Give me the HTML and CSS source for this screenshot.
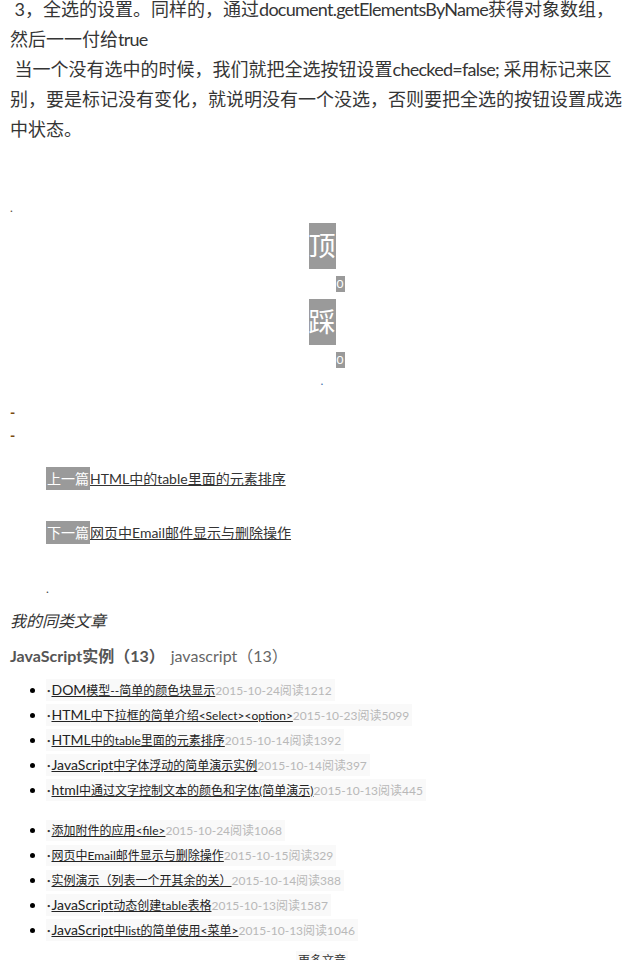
FILE: index.html
```html
<!DOCTYPE html>
<html lang="zh-CN">
<head>
<meta charset="utf-8">
<title>全选的设置</title>
<link rel="stylesheet" href="styles.css">
</head>
<body>
<div class="page">
  <div class="article">
    <p>&nbsp;3，全选的设置。同样的，通过<span class="en">document.getElementsByName</span>获得对象数组，然后一一付给<span class="en">true</span><br>&nbsp;当一个没有选中的时候，我们就把全选按钮设置<span class="en">checked=false;</span> 采用标记来区别，要是标记没有变化，就说明没有一个没选，否则要把全选的按钮设置成选中状态。</p>
  </div>

  <div class="tiny dot1">.</div>

  <div class="digg">
    <div class="digg-btn">顶</div>
    <div class="digg-count">0</div>
    <div class="digg-btn">踩</div>
    <div class="digg-count">0</div>
  </div>

  <div class="tiny dot2">.</div>

  <div class="tiny dash dash1">-</div>
  <div class="tiny dash dash2">-</div>

  <div class="nav">
    <div class="nav-row nav-prev"><span class="nav-tag">上一篇</span><a class="nav-link" href="#">HTML中的table里面的元素排序</a></div>
    <div class="nav-row nav-next"><span class="nav-tag">下一篇</span><a class="nav-link" href="#">网页中Email邮件显示与删除操作</a></div>
  </div>

  <div class="tiny dot3">.</div>

  <h3 class="related-title">我的同类文章</h3>

  <div class="cats"><b class="cat-main">JavaScript实例（13）</b><span class="cat-other">javascript（13）</span></div>

  <ul class="list list1">
    <li><span class="item"><span class="mk">•</span><a href="#"><span class="lead">DOM</span>模型--简单的颜色块显示</a><span class="date">2015-10-24阅读1212</span></span></li>
    <li><span class="item"><span class="mk">•</span><a href="#"><span class="lead">HTML</span>中下拉框的简单介绍&lt;Select&gt;&lt;option&gt;</a><span class="date">2015-10-23阅读5099</span></span></li>
    <li><span class="item"><span class="mk">•</span><a href="#"><span class="lead">HTML</span>中的table里面的元素排序</a><span class="date">2015-10-14阅读1392</span></span></li>
    <li><span class="item"><span class="mk">•</span><a href="#"><span class="lead">JavaScript</span>中字体浮动的简单演示实例</a><span class="date">2015-10-14阅读397</span></span></li>
    <li><span class="item"><span class="mk">•</span><a href="#"><span class="lead">html</span>中通过文字控制文本的颜色和字体(简单演示)</a><span class="date">2015-10-13阅读445</span></span></li>
  </ul>

  <ul class="list list2">
    <li><span class="item"><span class="mk">•</span><a href="#">添加附件的应用&lt;file&gt;</a><span class="date">2015-10-24阅读1068</span></span></li>
    <li><span class="item"><span class="mk">•</span><a href="#">网页中Email邮件显示与删除操作</a><span class="date">2015-10-15阅读329</span></span></li>
    <li><span class="item"><span class="mk">•</span><a href="#">实例演示（列表一个开其余的关）</a><span class="date">2015-10-14阅读388</span></span></li>
    <li><span class="item"><span class="mk">•</span><a href="#"><span class="lead">JavaScript</span>动态创建table表格</a><span class="date">2015-10-13阅读1587</span></span></li>
    <li><span class="item"><span class="mk">•</span><a href="#"><span class="lead">JavaScript</span>中list的简单使用&lt;菜单&gt;</a><span class="date">2015-10-13阅读1046</span></span></li>
  </ul>

  <div class="more"><a class="more-link" href="#">更多文章</a></div>
</div>
</body>
</html>
```

FILE: styles.css
```css
* { box-sizing: border-box; }

html, body {
  margin: 0;
  padding: 0;
  background: #ffffff;
}

body {
  font-family: Lato, "Noto Sans CJK SC", sans-serif;
  color: #333333;
  overflow: hidden;
}

.page {
  width: 644px;
  height: 960px;
  padding: 0 16px 0 10px;
  overflow: hidden;
}

.article p {
  margin: -6px 0 0 0;
  font-size: 18px;
  line-height: 30px;
  color: #353535;
}

.en {
  letter-spacing: -0.75px;
}

.tiny {
  font-size: 12px;
  line-height: 12px;
  height: 12px;
}

.dot1 {
  margin-top: 58px;
  color: #5a4a3a;
}

.digg {
  margin-top: 9px;
  display: flex;
  flex-direction: column;
  align-items: center;
  gap: 7px;
  margin-left: -10px;
  margin-right: -16px;
}

.digg-btn {
  width: 27px;
  height: 46px;
  background: #9a9a9a;
  color: #ffffff;
  font-size: 27px;
  line-height: 46px;
  text-align: center;
  white-space: nowrap;
  display: flex;
  justify-content: center;
}

.digg-count {
  width: 9px;
  height: 16px;
  background: #9a9a9a;
  color: #ffffff;
  font-size: 12px;
  line-height: 16px;
  text-align: center;
  margin-left: 36px;
}

.dot2 {
  margin-top: 7px;
  text-align: center;
  color: #3d6fa8;
  margin-left: -10px;
  margin-right: -16px;
}

.dash {
  color: #7a4a10;
  font-weight: 900;
  font-size: 14px;
}

.dash1 { margin-top: 19px; }
.dash2 { margin-top: 11px; }

.nav {
  padding-left: 36px;
}

.nav-row {
  display: flex;
  align-items: center;
  height: 23px;
  font-size: 14px;
}

.nav-prev { margin-top: 26px; }
.nav-next { margin-top: 31px; }

.nav-tag {
  display: inline-block;
  height: 23px;
  line-height: 23px;
  padding: 0 1px;
  background: #9a9a9a;
  color: #ffffff;
}

.nav-link {
  color: #333333;
  text-decoration: underline;
  line-height: 23px;
}

.dot3 {
  margin-top: 39px;
  padding-left: 36px;
  color: #444444;
}

.related-title {
  margin: 14px 0 0 0;
  font-size: 16px;
  line-height: 24px;
  font-weight: 400;
  font-style: italic;
  color: #333333;
}

.cats {
  margin-top: 11px;
  font-size: 16px;
  line-height: 24px;
  color: #555555;
  display: flex;
  gap: 6px;
}

.cat-main {
  font-weight: 700;
  color: #555555;
}

.cat-other {
  color: #666666;
}

.list {
  margin: 0;
  padding-left: 36px;
  list-style: disc;
}

.list1 { margin-top: 9px; }
.list2 { margin-top: 15px; }

.list li {
  font-size: 12px;
  line-height: 25px;
  height: 25px;
  color: #000000;
}

.list li::marker {
  font-size: 14px;
}

.item {
  display: inline-block;
  background: #f9f9f9;
  line-height: 21px;
  padding-right: 3px;
}

.mk {
  font-size: 6px;
  color: #333333;
  padding: 0 1px 0 1px;
  vertical-align: 2px;
}

.item a {
  color: #222222;
  text-decoration: underline;
}

.lead {
  font-size: 14px;
}

.date {
  color: #b8b8b8;
}

.more {
  margin-top: 9px;
  text-align: center;
  margin-left: -10px;
  margin-right: -16px;
  font-size: 12px;
  line-height: 20px;
}

.more-link {
  display: inline-block;
  padding: 0 2px;
  background: #f9f9f9;
  color: #333333;
  text-decoration: none;
}
```
